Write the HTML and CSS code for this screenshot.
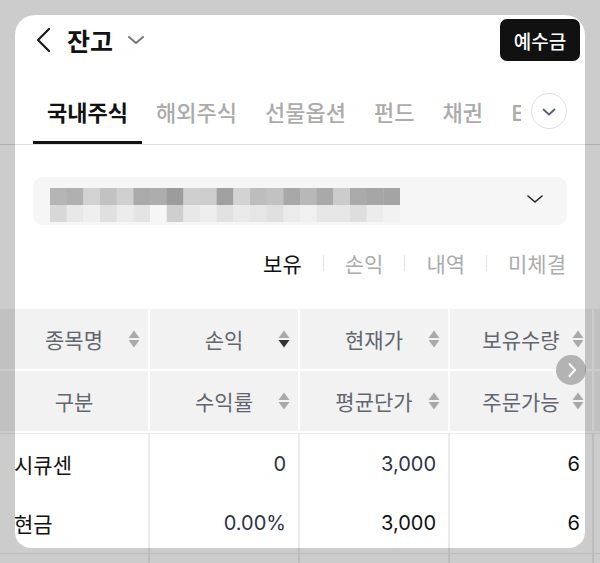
FILE: index.html
```html
<!DOCTYPE html>
<html lang="ko">
<head>
<meta charset="utf-8">
<title>잔고</title>
<link rel="stylesheet" href="styles.css">
</head>
<body>
<div class="page">
  <header class="topbar">
    <div class="title-group">
      <svg class="back" viewBox="0 0 16 26"><path d="M14 2 L3 13 L14 24" fill="none" stroke="#1a1a1a" stroke-width="2.2" stroke-linecap="round" stroke-linejoin="round"/></svg>
      <h1 class="title">잔고</h1>
      <svg class="title-caret" viewBox="0 0 18 10"><path d="M2 2 L9 8 L16 2" fill="none" stroke="#777" stroke-width="2" stroke-linecap="round" stroke-linejoin="round"/></svg>
    </div>
    <button class="deposit">예수금</button>
  </header>

  <nav class="tabs">
    <span class="tab active">국내주식</span>
    <span class="tab">해외주식</span>
    <span class="tab">선물옵션</span>
    <span class="tab">펀드</span>
    <span class="tab">채권</span>
    <span class="tab">ETF</span>
    <span class="more-wrap">
      <span class="more">
        <svg viewBox="0 0 14 8"><path d="M1.5 1.5 L7 6.5 L12.5 1.5" fill="none" stroke="#555d70" stroke-width="1.8" stroke-linecap="round" stroke-linejoin="round"/></svg>
      </span>
    </span>
  </nav>
  <div class="divider"></div>

  <div class="account">
    <svg class="mosaic" viewBox="0 0 350 34" width="350" height="34">
      <rect x="0" y="0" width="17" height="17" fill="#b5b5b5"/>
      <rect x="16.67" y="0" width="17" height="17" fill="#b0b0b0"/>
      <rect x="33.33" y="0" width="17" height="17" fill="#d2d2d2"/>
      <rect x="50" y="0" width="17" height="17" fill="#c2c2c2"/>
      <rect x="66.67" y="0" width="17" height="17" fill="#d0d0d0"/>
      <rect x="83.33" y="0" width="17" height="17" fill="#aaaaaa"/>
      <rect x="100" y="0" width="17" height="17" fill="#adadad"/>
      <rect x="116.67" y="0" width="17" height="17" fill="#9c9c9c"/>
      <rect x="133.33" y="0" width="17" height="17" fill="#cfcfcf"/>
      <rect x="150" y="0" width="17" height="17" fill="#cdcdcd"/>
      <rect x="166.67" y="0" width="17" height="17" fill="#a0a0a0"/>
      <rect x="183.33" y="0" width="17" height="17" fill="#d3d3d3"/>
      <rect x="200" y="0" width="17" height="17" fill="#bdbdbd"/>
      <rect x="216.67" y="0" width="17" height="17" fill="#c2c2c2"/>
      <rect x="233.33" y="0" width="17" height="17" fill="#a8a8a8"/>
      <rect x="250" y="0" width="17" height="17" fill="#b8b8b8"/>
      <rect x="266.67" y="0" width="17" height="17" fill="#a9a9a9"/>
      <rect x="283.33" y="0" width="17" height="17" fill="#cccccc"/>
      <rect x="300" y="0" width="17" height="17" fill="#aaaaaa"/>
      <rect x="316.67" y="0" width="17" height="17" fill="#a6a6a6"/>
      <rect x="333.33" y="0" width="16.67" height="17" fill="#a4a4a4"/>
      <rect x="0" y="17" width="17" height="17" fill="#d8d8d8"/>
      <rect x="16.67" y="17" width="17" height="17" fill="#e8e8e8"/>
      <rect x="33.33" y="17" width="17" height="17" fill="#efefef"/>
      <rect x="50" y="17" width="17" height="17" fill="#e0e0e0"/>
      <rect x="66.67" y="17" width="17" height="17" fill="#ececec"/>
      <rect x="83.33" y="17" width="17" height="17" fill="#e4e4e4"/>
      <rect x="100" y="17" width="17" height="17" fill="#f6f6f6"/>
      <rect x="116.67" y="17" width="17" height="17" fill="#cfcfcf"/>
      <rect x="133.33" y="17" width="17" height="17" fill="#e8e8e8"/>
      <rect x="150" y="17" width="17" height="17" fill="#eeeeee"/>
      <rect x="166.67" y="17" width="17" height="17" fill="#e2e2e2"/>
      <rect x="183.33" y="17" width="17" height="17" fill="#eaeaea"/>
      <rect x="200" y="17" width="17" height="17" fill="#e6e6e6"/>
      <rect x="216.67" y="17" width="17" height="17" fill="#e0e0e0"/>
      <rect x="233.33" y="17" width="17" height="17" fill="#ebebeb"/>
      <rect x="250" y="17" width="17" height="17" fill="#f0f0f0"/>
      <rect x="266.67" y="17" width="17" height="17" fill="#e6e6e6"/>
      <rect x="283.33" y="17" width="17" height="17" fill="#e6e6e6"/>
      <rect x="300" y="17" width="17" height="17" fill="#dedede"/>
      <rect x="316.67" y="17" width="17" height="17" fill="#ececec"/>
      <rect x="333.33" y="17" width="16.67" height="17" fill="#f2f2f2"/>
    </svg>
    <svg class="account-caret" viewBox="0 0 16 8"><path d="M1 1 L8 7 L15 1" fill="none" stroke="#222" stroke-width="1.6" stroke-linecap="round" stroke-linejoin="round"/></svg>
  </div>

  <div class="segments">
    <span class="seg active">보유</span>
    <span class="sep"></span>
    <span class="seg">손익</span>
    <span class="sep"></span>
    <span class="seg">내역</span>
    <span class="sep"></span>
    <span class="seg">미체결</span>
  </div>

  <div class="table">
    <div class="thead">
      <div class="th"><span class="th-label">종목명</span><svg class="sort" viewBox="0 0 12 18"><path d="M6 0.5 L11.5 8 L0.5 8 Z" fill="#a9a9a9"/><path d="M0.5 10 L11.5 10 L6 17.5 Z" fill="#a9a9a9"/></svg></div>
      <div class="th"><span class="th-label">손익</span><svg class="sort" viewBox="0 0 12 18"><path d="M6 0.5 L11.5 8 L0.5 8 Z" fill="#a9a9a9"/><path d="M0.5 10 L11.5 10 L6 17.5 Z" fill="#333"/></svg></div>
      <div class="th"><span class="th-label">현재가</span><svg class="sort" viewBox="0 0 12 18"><path d="M6 0.5 L11.5 8 L0.5 8 Z" fill="#a9a9a9"/><path d="M0.5 10 L11.5 10 L6 17.5 Z" fill="#a9a9a9"/></svg></div>
      <div class="th"><span class="th-label">보유수량</span><svg class="sort" viewBox="0 0 12 18"><path d="M6 0.5 L11.5 8 L0.5 8 Z" fill="#a9a9a9"/><path d="M0.5 10 L11.5 10 L6 17.5 Z" fill="#a9a9a9"/></svg></div>
      <div class="th"></div>

      <div class="th"><span class="th-label">구분</span></div>
      <div class="th"><span class="th-label">수익률</span><svg class="sort" viewBox="0 0 12 18"><path d="M6 0.5 L11.5 8 L0.5 8 Z" fill="#a9a9a9"/><path d="M0.5 10 L11.5 10 L6 17.5 Z" fill="#a9a9a9"/></svg></div>
      <div class="th"><span class="th-label">평균단가</span><svg class="sort" viewBox="0 0 12 18"><path d="M6 0.5 L11.5 8 L0.5 8 Z" fill="#a9a9a9"/><path d="M0.5 10 L11.5 10 L6 17.5 Z" fill="#a9a9a9"/></svg></div>
      <div class="th"><span class="th-label">주문가능</span><svg class="sort" viewBox="0 0 12 18"><path d="M6 0.5 L11.5 8 L0.5 8 Z" fill="#a9a9a9"/><path d="M0.5 10 L11.5 10 L6 17.5 Z" fill="#a9a9a9"/></svg></div>
      <div class="th"></div>
    </div>

    <div class="tbody">
      <div class="record">
        <div class="td name"><span class="line">시큐센</span><span class="line">현금</span></div>
        <div class="td"><span class="line num">0</span><span class="line num">0.00%</span></div>
        <div class="td"><span class="line num">3,000</span><span class="line">3,000</span></div>
        <div class="td"><span class="line">6</span><span class="line">6</span></div>
        <div class="td"><span class="line"></span><span class="line"></span></div>
      </div>
      <div class="record">
        <div class="td name"><span class="line"></span><span class="line"></span></div>
        <div class="td"><span class="line"></span><span class="line"></span></div>
        <div class="td"><span class="line"></span><span class="line"></span></div>
        <div class="td"><span class="line"></span><span class="line"></span></div>
        <div class="td"><span class="line"></span><span class="line"></span></div>
      </div>
    </div>

    <span class="scroll-hint">
      <svg viewBox="0 0 10 16"><path d="M2.5 2 L8 8 L2.5 14" fill="none" stroke="#fff" stroke-width="2" stroke-linecap="round" stroke-linejoin="round"/></svg>
    </span>
  </div>

  <div class="spotlight"></div>
</div>
</body>
</html>
```

FILE: styles.css
```css
* {
  box-sizing: border-box;
  margin: 0;
  padding: 0;
}

html, body {
  background: #fff;
}

body {
  width: 600px;
  height: 563px;
  overflow: hidden;
  font-family: Inter, "Noto Sans CJK KR", sans-serif;
  color: #111;
}

.page {
  position: relative;
  width: 600px;
  height: 563px;
  overflow: hidden;
}

/* Top bar */
.topbar {
  height: 80px;
  display: flex;
  align-items: center;
  justify-content: space-between;
  padding: 0 20px 0 35px;
}

.title-group {
  display: flex;
  align-items: center;
}

.back {
  width: 16px;
  height: 26px;
  display: block;
}

.title {
  font-family: "Noto Sans CJK KR", sans-serif;
  font-size: 25px;
  font-weight: 700;
  margin-left: 16px;
  line-height: 1;
}

.title-caret {
  width: 18px;
  height: 10px;
  margin-left: 14px;
  display: block;
}

.deposit {
  width: 80px;
  height: 42px;
  background: #111;
  color: #fff;
  border: 0;
  border-radius: 7px;
  font-family: "Noto Sans CJK KR", sans-serif;
  font-size: 19px;
  font-weight: 500;
}

/* Tabs */
.tabs {
  position: relative;
  height: 64px;
  display: flex;
  padding-left: 33px;
  white-space: nowrap;
  overflow: hidden;
}

.tab {
  flex: none;
  padding: 0 14px;
  display: flex;
  align-items: center;
  font-family: "Noto Sans CJK KR", sans-serif;
  font-size: 22px;
  font-weight: 500;
  color: #ababab;
  border-bottom: 3px solid transparent;
}

.tab.active {
  color: #111;
  font-weight: 700;
  border-bottom-color: #111;
}

.more-wrap {
  position: absolute;
  right: 33px;
  top: 13px;
  height: 36px;
  padding-left: 10px;
  background: #fff;
  display: flex;
}

.more {
  width: 36px;
  height: 36px;
  border-radius: 50%;
  border: 1px solid #dcdcdc;
  background: #fff;
  display: flex;
  align-items: center;
  justify-content: center;
}

.more svg {
  width: 14px;
  height: 8px;
  display: block;
  margin-top: 1px;
}

.divider {
  height: 1px;
  background: #dedede;
}

/* Account selector */
.account {
  margin: 32px 33px 0;
  height: 48px;
  background: #f6f6f6;
  border-radius: 10px;
  display: flex;
  align-items: center;
  justify-content: space-between;
  padding: 0 24px 0 17px;
}

.mosaic {
  display: block;
  margin-top: 8px;
}

.account-caret {
  width: 16px;
  height: 8px;
  display: block;
  margin-top: -5px;
}

/* Segments */
.segments {
  margin-top: 18px;
  height: 40px;
  display: flex;
  justify-content: flex-end;
  align-items: center;
  gap: 21px;
  padding-right: 34px;
  font-family: "Noto Sans CJK KR", sans-serif;
  font-size: 21px;
  color: #ababab;
}

.seg.active {
  color: #111;
}

.sep {
  width: 1px;
  height: 16px;
  background: #e2e2e2;
}

/* Table */
.table {
  position: relative;
  margin-top: 26px;
}

.thead {
  display: grid;
  grid-template-columns: 148px 148px 148px 142px 150px;
  gap: 2px;
}

.th {
  height: 60px;
  background: #f2f2f2;
  display: grid;
  grid-template-columns: 20px 1fr 12px;
  align-items: center;
  padding-right: 8px;
  font-family: "Noto Sans CJK KR", sans-serif;
  font-size: 21px;
  color: #62666f;
  white-space: nowrap;
}

.th-label {
  grid-column: 2;
  text-align: center;
}

.sort {
  grid-column: 3;
  width: 12px;
  height: 18px;
  display: block;
}

.tbody {
  margin-top: 2px;
}

.record {
  display: grid;
  grid-template-columns: 148px 148px 148px 142px 150px;
  column-gap: 2px;
  background: #ebebeb;
  padding-top: 1px;
}

.td {
  background: #fff;
  display: flex;
  flex-direction: column;
  align-items: flex-end;
  padding: 0 12px;
  font-size: 20px;
  color: #111;
}

.line {
  height: 60px;
  display: flex;
  align-items: center;
}

.line:first-child {
  height: 59px;
}

.td.name {
  align-items: flex-start;
  padding-left: 14px;
  font-size: 21px;
}

.num {
  color: #2d3347;
}

.scroll-hint {
  position: absolute;
  left: 556px;
  top: 46px;
  width: 30px;
  height: 30px;
  border-radius: 50%;
  background: #b3b3b3;
  display: flex;
  align-items: center;
  justify-content: center;
}

.scroll-hint svg {
  width: 10px;
  height: 16px;
  display: block;
  margin-left: 2px;
}

/* Spotlight dim */
.spotlight {
  position: absolute;
  left: 15px;
  top: 15px;
  width: 570px;
  height: 533px;
  border-radius: 20px 20px 16px 16px;
  box-shadow: 0 0 0 800px rgba(0, 0, 0, 0.2);
  pointer-events: none;
}
```
